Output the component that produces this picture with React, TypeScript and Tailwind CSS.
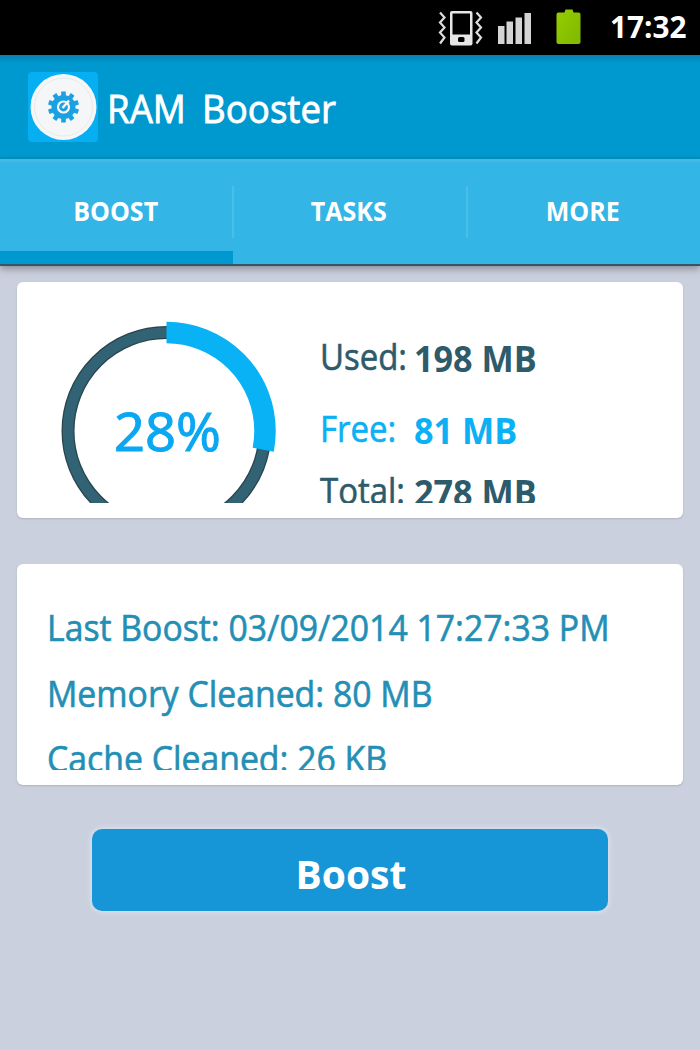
const USED_PERCENT = 28;
const RING_RADIUS = 98.5;

const tabs = ["BOOST", "TASKS", "MORE"];

const history = [
  "Last Boost: 03/09/2014 17:27:33 PM",
  "Memory Cleaned: 80 MB",
  "Cache Cleaned: 26 KB",
];

const stats = [
  { label: "Used:", value: "198 MB", row: "leading-[72px] text-[#2d5b6b]" },
  { label: "Free:", value: "81 MB", row: "leading-[72px] text-[#0bb0f5]" },
  { label: "Total:", value: "278 MB", row: "leading-[51px] text-[#2d5b6b]" },
];

/** Vibrate mode, signal and battery icons plus the clock. */
function StatusBar() {
  return (
    <div className="flex h-[55px] items-start justify-end bg-black pr-[12px]">
      <svg width="174" height="55" viewBox="0 0 174 55" fill="none">
        {/* vibrating phone */}
        <g stroke="#dcdcdc" strokeWidth="2.200">
          <path d="M5 12.500l4.500 5-4.500 5 4.500 5-4.500 5 4.500 5-4.500 6" />
          <path d="M41.500 12.500l4.500 5-4.500 5 4.500 5-4.500 5 4.500 5-4.500 6" />
        </g>
        <rect x="15" y="11" width="22.500" height="34.500" rx="2" fill="#e6e6e6" />
        <rect x="17.500" y="13.500" width="17.500" height="21" fill="#000" />
        <rect x="23" y="37" width="6.500" height="5" rx="1.500" fill="#000" />
        {/* signal bars */}
        <g fill="#d4d4d4">
          <rect x="63" y="26" width="6.500" height="18" />
          <rect x="71.500" y="21.500" width="6.500" height="22.500" />
          <rect x="80.500" y="17.500" width="6.500" height="26.500" />
          <rect x="89.500" y="13" width="6.500" height="31" />
        </g>
        {/* battery */}
        <path
          d="M124.500 12.500h5l1-3h7l1 3h5q2 0 2 2v27.500q0 2-2 2h-20q-2 0-2-2V14.500q0-2 2-2z"
          fill="url(#battery)"
        />
        <defs>
          <linearGradient id="battery" x1="0" y1="0" x2="1" y2="1">
            <stop stopColor="#96cd00" />
            <stop offset="1" stopColor="#7fb800" />
          </linearGradient>
        </defs>
      </svg>
      <span className="ml-px w-[78px] origin-left scale-x-[0.99] text-[30px] font-bold leading-[53px] text-white">
        17:32
      </span>
    </div>
  );
}

function AppLogo() {
  return (
    <svg className="ml-7 mt-[17px]" width="70" height="70" viewBox="0 0 70 70">
      <rect width="70" height="70" rx="4" fill="#06aef2" />
      <circle cx="35.500" cy="35" r="33" fill="#f5f6f8" />
      <circle cx="35.500" cy="35" r="29" fill="none" stroke="#ece8ea" />
      <g fill="#1ba1e2" transform="translate(35.500 35)">
        <circle r="12" />
        {[0, 36, 72, 108, 144, 180, 216, 252, 288, 324].map((angle) => (
          <rect key={angle} x="-2.300" y="-15.500" width="4.600" height="6" transform={`rotate(${angle})`} />
        ))}
      </g>
      <circle cx="35.500" cy="35" r="5.500" fill="none" stroke="#f5f6f8" strokeWidth="2.200" />
      <path d="M34.500 36L41 28.500" stroke="#f5f6f8" strokeWidth="2.500" />
    </svg>
  );
}

function UsageRing({ percent }: { percent: number }) {
  const length = 2 * Math.PI * RING_RADIUS;

  return (
    <svg width="220" height="220" viewBox="0 0 220 220" fill="none" className="shrink-0">
      <circle cx="109.500" cy="110" r={RING_RADIUS} stroke="#2a444e" strokeWidth="13" />
      <circle cx="109.500" cy="110" r={RING_RADIUS} stroke="#316374" strokeWidth="10.500" />
      <circle
        cx="109.500"
        cy="110"
        r={RING_RADIUS}
        stroke="#08b2f4"
        strokeWidth="21.500"
        strokeDasharray={`${(length * percent) / 100} ${length}`}
        transform="rotate(-90 109.500 110)"
      />
      <text
        x="110.500"
        y="129.500"
        textAnchor="middle"
        textLength="107"
        lengthAdjust="spacingAndGlyphs"
        stroke="#0ba7f2"
        strokeWidth="1.100"
        className="fill-[#0ba7f2] text-[53px]"
      >
        {percent}%
      </text>
    </svg>
  );
}

export default function App() {
  return (
    <main className="flex h-[1050px] w-[700px] flex-col overflow-hidden bg-[#cad0dd] font-['Open_Sans','Noto_Sans',sans-serif]">
      <StatusBar />

      <header className="flex h-26 bg-linear-to-b from-[#0581ae] via-[#0099cf] via-8% to-[#0099cf]">
        <AppLogo />
        <h1 className="ml-[9px] origin-left scale-x-[0.965] whitespace-nowrap text-[38px] leading-[106px] text-white [-webkit-text-stroke:0.8px] [word-spacing:7px]">
          RAM Booster
        </h1>
      </header>

      <nav className="flex h-[107px] border-b-2 border-t-3 border-b-[#37546b] border-t-[#45b9e4] bg-[#33b5e5] shadow-[0_-2px_0_#018cbc,0_3px_7px_rgba(90,85,90,0.55)]">
        {tabs.map((tab, i) => (
          <button
            key={tab}
            className={`relative flex flex-1 items-center justify-center pr-0.5 ${
              i === 0 ? "border-b-13 border-[#0099cf] pt-[9px]" : "pb-1"
            }`}
          >
            <span className="scale-x-[0.91] text-[27.500px] font-bold text-white">{tab}</span>
            {i > 0 && <span className="absolute -left-px top-6 h-[52px] w-0.5 bg-[#4abde9]" />}
          </button>
        ))}
      </nav>

      {/* Memory usage */}
      <section className="mx-[17px] mt-4 h-[236px] rounded-md bg-white py-[15px] shadow-[0_1px_2px_rgba(120,120,130,0.35)]">
        <div className="flex h-[206px] overflow-hidden pl-[39.500px]">
          <div className="mt-6 shrink-0">
            <UsageRing percent={USED_PERCENT} />
          </div>
          <div className="ml-[43px] mt-6 text-[36px]">
            {stats.map(({ label, value, row }) => (
              <div key={label} className={`flex ${row}`}>
                <span className="w-[94px] origin-left scale-x-[0.915] whitespace-nowrap [-webkit-text-stroke:0.6px]">
                  {label}
                </span>
                <span className="relative top-0.5 origin-left scale-x-[0.95] whitespace-nowrap font-bold">
                  {value}
                </span>
              </div>
            ))}
          </div>
        </div>
      </section>

      {/* Last boost summary */}
      <section className="mx-[17px] mt-[46px] h-[221px] rounded-md bg-white pb-[15px] pt-[31px] shadow-[0_1px_2px_rgba(120,120,130,0.35)]">
        <div className="h-[175px] overflow-hidden pl-[29.500px] text-[36px] leading-[65.500px] text-[#238fb5]">
          {history.map((line) => (
            <p
              key={line}
              className="origin-left scale-x-[0.938] whitespace-nowrap [-webkit-text-stroke:0.6px]"
            >
              {line}
            </p>
          ))}
        </div>
      </section>

      <button className="mx-[92px] mt-11 h-[82px] rounded-[10px] bg-[#1696d6] pl-0.5 pt-[9px] text-[39px] font-bold text-white shadow-[0_0_4px_2px_rgba(216,224,238,0.9)]">
        Boost
      </button>
    </main>
  );
}
